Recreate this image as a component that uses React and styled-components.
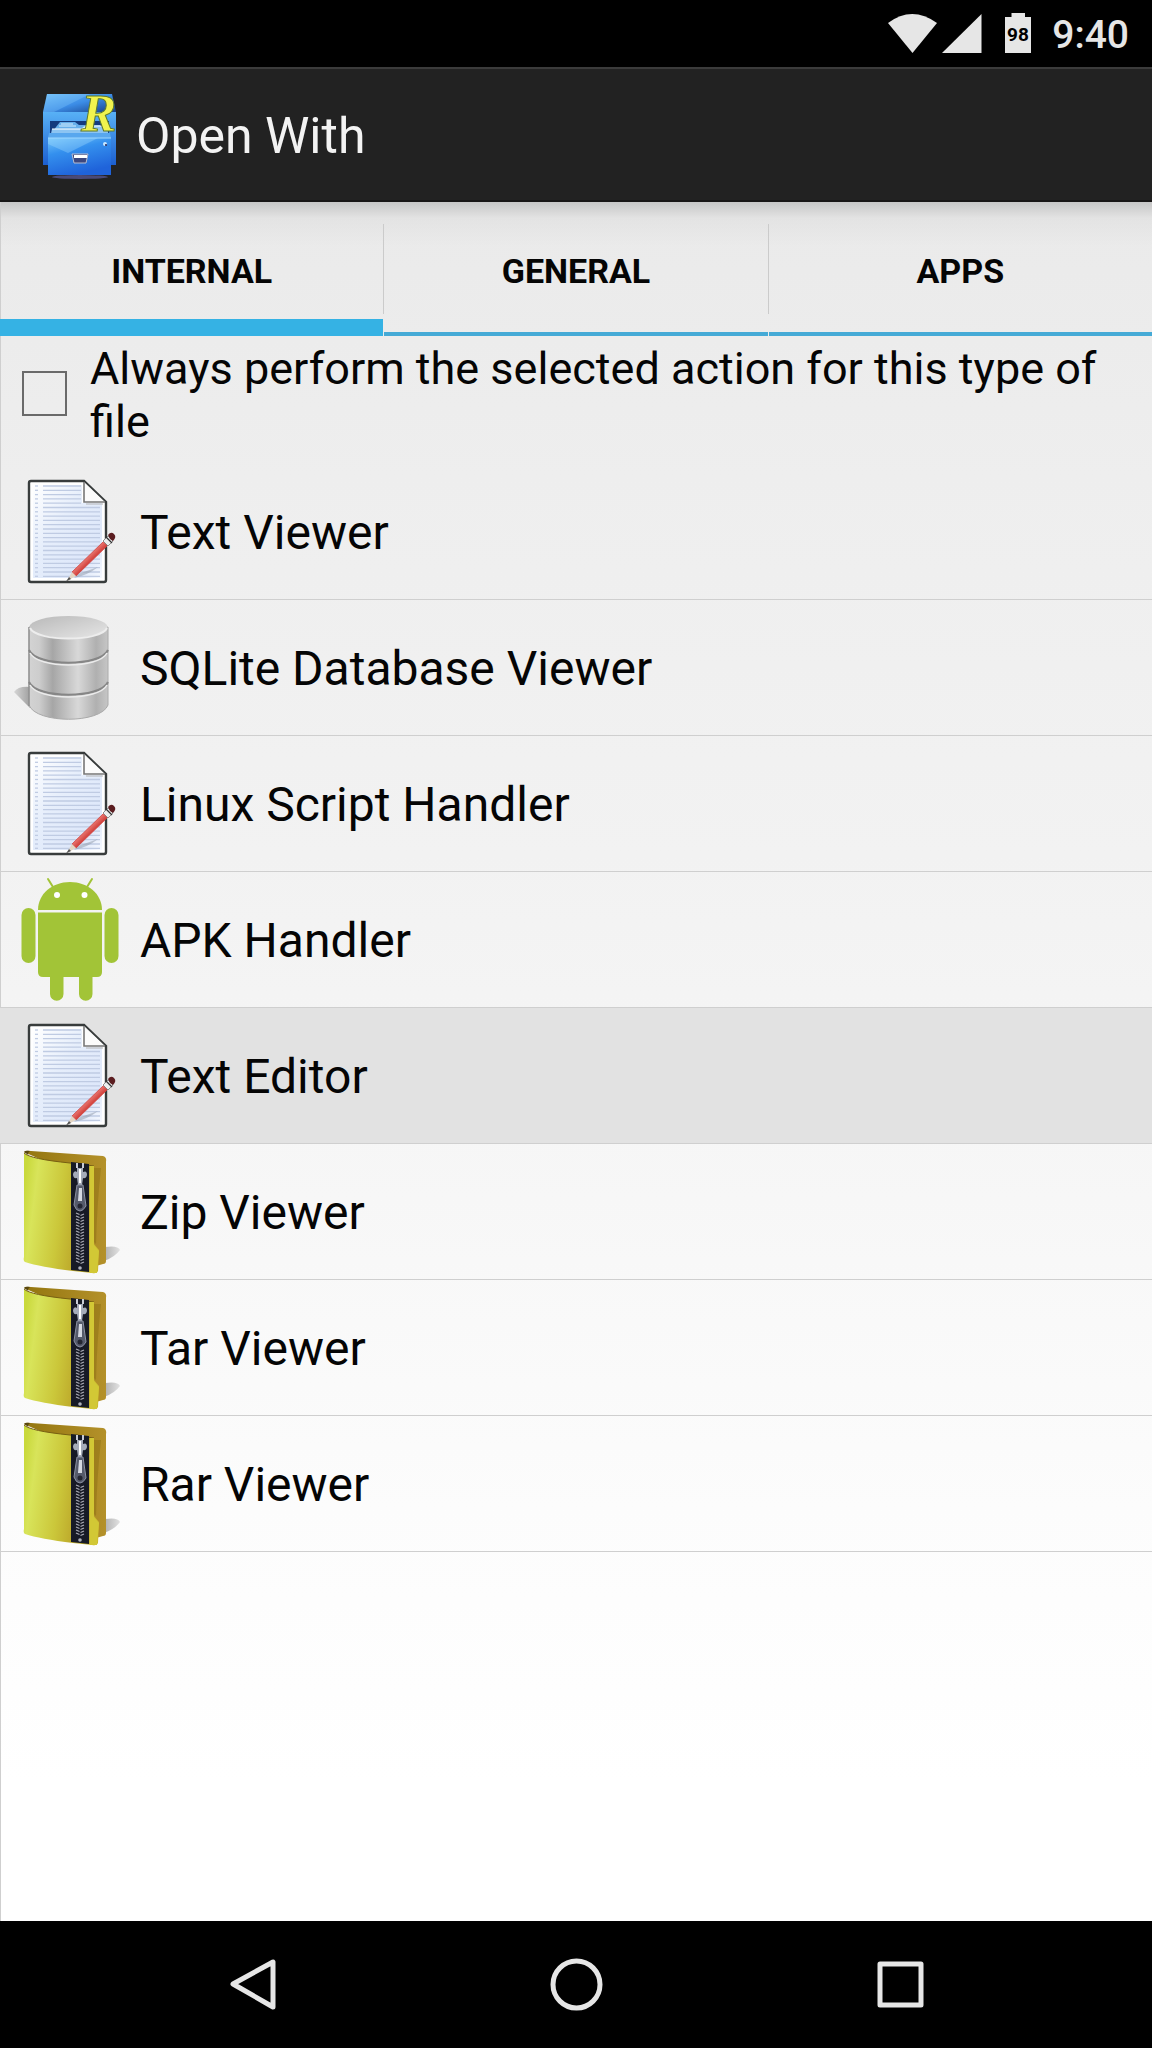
import React, { useState } from 'react'
import styled, { createGlobalStyle } from 'styled-components'

const GlobalStyle = createGlobalStyle`
* {
  box-sizing: border-box;
}
body {
  margin: 0;
  background: #000;
  font-family: Roboto, "Liberation Sans", sans-serif;
}
button {
  margin: 0;
  padding: 0;
  border: none;
  background: none;
  font: inherit;
  color: inherit;
  cursor: pointer;
}
svg {
  display: block;
  flex-shrink: 0;
}
`
const Container = styled.div`
min-height: 100vh;
display: flex;
flex-direction: column;
`
const StatusBar = styled.div`
height: 67px;
padding: 0 23px;
display: flex;
align-items: center;
justify-content: flex-end;
background: #000;
color: #e6e6e6;
`
const StatusIcons = styled.div`
display: flex;
margin-right: 19px;
`
const Clock = styled.time`
padding-top: 3px;
font-size: 39px;
line-height: 40px;
font-weight: 500;
`
const ActionBar = styled.header`
height: 135px;
padding-left: 30px;
display: flex;
align-items: center;
gap: 4px;
background: #222;
border-top: 2px solid #3b3b3b;
border-bottom: 2px solid #181616;
`
const Title = styled.h1`
margin: 0;
padding-top: 3px;
font-size: 50px;
line-height: 60px;
font-weight: 400;
color: #f3f3f3;
`
const Content = styled.main`
flex: 1;
box-shadow: inset 1px 0 #cfcfcf;
background:
  linear-gradient(#c6c6c6, rgba(220, 220, 220, 0.5) 16px, rgba(235, 235, 235, 0) 44px) no-repeat,
  linear-gradient(#eaeaea, #eeeeee 16%, #f2f2f2 38%, #f7f7f7 58%, #fcfcfc 76%, #fff 92%);
`
const Tabs = styled.div`
display: flex;
gap: 1px;
height: 134px;
`
const Divider = styled.div`
width: 1px;
height: 90px;
margin: 22px -1px 0 -1px;
background: #cbcbcb;
`
const Tab = styled.button`
flex: 1 1 0;
border-bottom: ${props => props.$active ? '17px solid #35b2e4' : '4px solid #45aad6'};
padding-top: ${props => props.$active ? '20px' : '7px'};
font-size: 34px;
line-height: 40px;
font-weight: 700;
text-transform: uppercase;
color: #050505;
`
const Always = styled.label`
min-height: 128px;
padding: 6px 16px 16px 22px;
display: flex;
align-items: center;
gap: 23px;
font-size: 45px;
line-height: 53px;
color: #050505;
`
const Checkbox = styled.input`
appearance: none;
flex-shrink: 0;
width: 45px;
height: 45px;
margin: 0 0 4px;
border: 2px solid #6a6a6a;
&:checked {
  background: #35b2e4;
}
`
const List = styled.ul`
margin: 0;
padding: 0;
list-style: none;
`
const Item = styled.li`
border-bottom: 1px solid #cfcfcf;
background: ${props => props.$pressed ? '#e2e2e2' : 'transparent'};
`
const Row = styled.button`
width: 100%;
height: 135px;
display: flex;
align-items: center;
gap: 16px;
text-align: left;
font-size: 48px;
line-height: 56px;
color: #050505;
`
const Name = styled.span`
padding-top: 3px;
`
const NavBar = styled.nav`
height: 127px;
padding: 0 90px;
display: flex;
background: #000;
`
const NavButton = styled.button`
flex: 1;
display: flex;
align-items: center;
justify-content: center;
`

const AppLogo = () => (
  <svg width="102" height="110" viewBox="0 0 102 110" aria-hidden="true">
    <defs>
      <linearGradient id="roof" x1="0" y1="0" x2="1" y2="1">
        <stop offset="0" stopColor="#6dbdf8" />
        <stop offset="0.5" stopColor="#3b8ce6" />
        <stop offset="1" stopColor="#173e86" />
      </linearGradient>
      <linearGradient id="cabinet" x1="0" y1="0" x2="0" y2="1">
        <stop offset="0" stopColor="#58b1f6" />
        <stop offset="1" stopColor="#1c5fd0" />
      </linearGradient>
      <linearGradient id="drawer" x1="0" y1="0" x2="0.4" y2="1">
        <stop offset="0" stopColor="#74c6fb" />
        <stop offset="0.4" stopColor="#3490ee" />
        <stop offset="1" stopColor="#1f63da" />
      </linearGradient>
    </defs>
    <ellipse cx="50" cy="97" rx="28" ry="2" fill="#4a4a78" />
    <path d="M17 14H82L86 32H13Z" fill="url(#roof)" />
    <path d="M17 14H60L24 32H13Z" fill="#8bd0ff" opacity="0.3" />
    <path d="M13 32H86V85H13Z" fill="url(#cabinet)" />
    <path d="M20 41H79V58H20Z" fill="#143a7e" />
    <path d="M26 47L30 42H45L49 45H70V50H24Z" fill="#66aeea" />
    <path d="M31 44H43M29 46H46" stroke="#d6efff" strokeWidth="1" />
    <path d="M22 49H50L54 46H77L79 58H20Z" fill="#8cc4f2" />
    <path d="M22 49H52L56 46H76" fill="none" stroke="#fff" strokeWidth="1" />
    <path d="M19 53H80L81 58H18Z" fill="#58a7ee" />
    <path d="M18 58H81V95H18Z" fill="url(#drawer)" />
    <path d="M18 58H68L38 73L18 64Z" fill="#a4dcff" opacity="0.35" />
    <path d="M18 58H81" stroke="#9ed7ff" strokeWidth="1" />
    <path d="M42 74H58L56 83H44Z" fill="#3c477e" stroke="#b7bdd0" strokeWidth="1" />
    <path d="M44 75H57V78H44Z" fill="#fff" />
    <circle cx="75" cy="64" r="2" fill="#c8e7ff" />
    <circle cx="76" cy="65" r="1" fill="#225" />
    <text
      x="51" y="51" fontFamily="Liberation Serif, serif" fontSize="53" fontWeight="700" fontStyle="italic"
      fill="#f0f34e" stroke="#5d792c" strokeWidth="1"
    >R</text>
  </svg>
)

const sheetLines = Array.from({ length: 22 }, (_, i) => 22 + i * 4.3)

const TextIcon = () => (
  <svg width="124" height="135" viewBox="0 0 124 135" aria-hidden="true">
    <defs>
      <linearGradient id="sheet" x1="0" y1="0" x2="1" y2="1">
        <stop offset="0" stopColor="#fff" />
        <stop offset="0.4" stopColor="#e6eefb" />
        <stop offset="0.8" stopColor="#dde7fa" />
        <stop offset="1" stopColor="#f6f9ff" />
      </linearGradient>
      <linearGradient id="pencil" x1="0" y1="0" x2="1" y2="1">
        <stop offset="0.4" stopColor="#f08a84" />
        <stop offset="0.55" stopColor="#d2413c" />
      </linearGradient>
    </defs>
    <path d="M31 17H84L106 38V116Q106 118 104 118H31Q29 118 29 116V19Q29 17 31 17Z" fill="#fff" stroke="#383c3c" strokeWidth="2.4" />
    <path d="M33 21H82V39H102V114H33Z" fill="url(#sheet)" />
    {sheetLines.map(y => (
      <g key={y} stroke="#bfcbe3" strokeWidth="1.3">
        <path d={`M35 ${y}h3`} />
        <path d={`M43 ${y}H${y < 41 ? 81 : 100}`} />
      </g>
    ))}
    <path d="M84 18V38H105Z" fill="#fbfbfb" />
    <path d="M84 18V38H105" fill="none" stroke="#777" strokeWidth="1.6" />
    <path d="M86 40H103" stroke="#b5b5b5" strokeWidth="1" />
    <path d="M74 114Q88 111 98 103L78 110Z" fill="#8f9aaa" opacity="0.5" />
    <path d="M104 77L108 81L76 112L72 108Z" fill="url(#pencil)" stroke="#d2413c" strokeWidth="0.8" />
    <path d="M72 108L76 112L67 117Z" fill="#e4d6c4" />
    <path d="M69 113L71 115L66 117.500Z" fill="#555" />
    <path d="M108 72L113 77L108 82L103 77Z" fill="#eceeee" stroke="#777" strokeWidth="0.8" />
    <path d="M108 71Q111 67 114 70Q117 73 113 77L110 75Z" fill="#5b1d20" />
    <path d="M106 73L112 79" stroke="#333" strokeWidth="1.2" />
  </svg>
)

const DatabaseIcon = () => (
  <svg width="124" height="135" viewBox="0 0 124 135" aria-hidden="true">
    <defs>
      <linearGradient id="steel" x1="0" x2="1">
        <stop offset="0" stopColor="#d3d3d3" />
        <stop offset="0.13" stopColor="#cdcdcd" />
        <stop offset="0.3" stopColor="#a6a6a6" />
        <stop offset="0.62" stopColor="#d8d8d8" />
        <stop offset="0.85" stopColor="#b0b0b0" />
        <stop offset="1" stopColor="#c6c6c6" />
      </linearGradient>
      <linearGradient id="lid" x1="0" y1="0" x2="1" y2="1">
        <stop offset="0" stopColor="#b9b9b9" />
        <stop offset="1" stopColor="#e6e6e6" />
      </linearGradient>
      <linearGradient id="dbShade" x1="0" x2="1">
        <stop offset="0" stopColor="#d6d6d6" />
        <stop offset="1" stopColor="#a0a0a0" />
      </linearGradient>
    </defs>
    <path d="M14 92Q18 86 30 87V108Q22 100 14 92Z" fill="url(#dbShade)" />
    <path d="M29 27V105C36 124 101 124 108 105V27Z" fill="url(#steel)" stroke="#aaa" strokeWidth="1" />
    <path d="M29 27V106" stroke="#898989" strokeWidth="1.2" />
    <ellipse cx="68.500" cy="27" rx="39" ry="11" fill="url(#lid)" />
    <path d="M30 28C36 42 101 42 107 28" fill="none" stroke="#ededed" strokeWidth="2" />
    <path d="M29 50C36 67 101 67 108 50M29 82C36 99 101 99 108 82" fill="none" stroke="#868686" strokeWidth="2" />
    <path d="M30 53C38 69 99 69 107 53M30 85C38 101 99 101 107 85" fill="none" stroke="#ebebeb" strokeWidth="1.5" />
  </svg>
)

const AndroidIcon = () => (
  <svg width="124" height="135" viewBox="0 0 124 135" fill="#a2c437" aria-hidden="true">
    <path d="M38 38C38 22 52 10 70 10S102 22 102 38Z" />
    <path d="M48 7L53 15M92 7L87 15" stroke="#a2c437" strokeWidth="2" strokeLinecap="round" />
    <circle cx="57" cy="23" r="3" fill="#fff" />
    <circle cx="84.500" cy="23" r="3" fill="#fff" />
    <path d="M38 40.500H102V100Q102 105 97 105H43Q38 105 38 100Z" />
    <rect x="21.500" y="36" width="14" height="55" rx="7" />
    <rect x="104.500" y="36" width="14" height="55" rx="7" />
    <path d="M50 100H63.500V122A6.750 6.750 0 0 1 50 122ZM79 100H92.500V122A6.750 6.750 0 0 1 79 122Z" />
  </svg>
)

const teeth = Array.from({ length: 17 }, (_, i) => 69 + i * 3)

const ArchiveIcon = () => (
  <svg width="124" height="135" viewBox="0 0 124 135" aria-hidden="true">
    <defs>
      <linearGradient id="cover" x1="0" x2="1" y1="0.3" y2="0.5">
        <stop offset="0" stopColor="#c9d93c" />
        <stop offset="0.15" stopColor="#d8e45a" />
        <stop offset="0.5" stopColor="#cbc73a" />
        <stop offset="0.75" stopColor="#bda92b" />
        <stop offset="1" stopColor="#c9b62e" />
      </linearGradient>
      <linearGradient id="back" x1="0" x2="1">
        <stop offset="0" stopColor="#93750f" />
        <stop offset="1" stopColor="#b4912a" />
      </linearGradient>
      <linearGradient id="folderShade" x1="0" x2="1">
        <stop offset="0" stopColor="#b0b0b0" />
        <stop offset="1" stopColor="#e2e2e2" />
      </linearGradient>
    </defs>
    <path d="M105 103Q118 101 120 106Q115 113 104 117Z" fill="url(#folderShade)" />
    <path d="M24 8Q26 6 31 7L103 12Q107 13 106 18V117Q106 120 103 120L96 122L60 24Z" fill="url(#back)" />
    <path d="M94 24H101Q97 60 96 100L94 98Z" fill="#84690e" opacity="0.4" />
    <path d="M24 9Q30 15 70 19L94 22V100L99 106L98 127Q97 130 92 129L73 127Q40 123 25 118Q23 117 24 113Z" fill="url(#cover)" />
    <path d="M24 9Q30 15 70 19L94 22" fill="none" stroke="#775f12" strokeWidth="1" />
    <path d="M24 8Q25 6 30 7Q26 10 30 12Z" fill="#59480f" />
    <path d="M90 22H94V101L99 107L97 129H90Z" fill="#d2c835" />
    <path d="M71 18L89 20V128L71 126Z" fill="#171a26" />
    <path d="M77 19V24M83 19V24" stroke="#c8cbd5" strokeWidth="2" />
    {teeth.map(y => (
      <path key={y} d={`M76 ${y}l3.500 1.500M84 ${y + 1}l-3.500 1.500`} stroke="#a9aab5" strokeWidth="1.300" />
    ))}
    <path d="M77 24H83V28Q87 26 87 31Q86 35 83 34L82 41H78L77 34Q73 35 73 30Q74 26 77 28Z" fill="#a5abb9" />
    <path d="M80 25V39" stroke="#fff" strokeWidth="2" />
    <path d="M77 41H83L86 62Q83 67 80 67Q76 67 74 61Z" fill="#555a6b" stroke="#8b90a2" strokeWidth="1" />
    <path d="M79 44H82V57H78Z" fill="#d6d9e2" />
    <circle cx="80" cy="62" r="2.500" fill="#242632" />
    <circle cx="80" cy="124" r="1.800" fill="#aeb1bc" />
  </svg>
)

const tabs = ['Internal', 'General', 'Apps']

const handlers = [
  { name: 'Text Viewer', icon: TextIcon },
  { name: 'SQLite Database Viewer', icon: DatabaseIcon },
  { name: 'Linux Script Handler', icon: TextIcon },
  { name: 'APK Handler', icon: AndroidIcon },
  { name: 'Text Editor', icon: TextIcon },
  { name: 'Zip Viewer', icon: ArchiveIcon },
  { name: 'Tar Viewer', icon: ArchiveIcon },
  { name: 'Rar Viewer', icon: ArchiveIcon },
]

const App = () => {
  const [tab, setTab] = useState('Internal')
  const [selected, setSelected] = useState('Text Editor')

  return (
    <Container>
      <GlobalStyle />
      <StatusBar>
        <StatusIcons>
          <svg width="146" height="42" viewBox="0 0 146 42" fill="#e6e6e6" aria-label="Wi-Fi, signal, battery 98">
            <path d="M1 10Q25 -8 50 10L25.500 40Z" />
            <path d="M55 40L94.500 1V40Z" />
            <path d="M118 4H124.500V0H138V4H144V40H118Z" />
            <text x="131" y="28" textAnchor="middle" fontFamily="Roboto, sans-serif" fontSize="19" fontWeight="700" fill="#000">98</text>
          </svg>
        </StatusIcons>
        <Clock>9:40</Clock>
      </StatusBar>
      <ActionBar>
        <AppLogo />
        <Title>Open With</Title>
      </ActionBar>
      <Content>
        <Tabs role="tablist">
          {tabs.map((name, i) => (
            <React.Fragment key={name}>
              {i > 0 && <Divider />}
              <Tab role="tab" aria-selected={tab === name} $active={tab === name} onClick={() => setTab(name)}>
                {name}
              </Tab>
            </React.Fragment>
          ))}
        </Tabs>
        <Always>
          <Checkbox type="checkbox" />
          <span>Always perform the selected action for this type of file</span>
        </Always>
        <List>
          {handlers.map(({ name, icon: Icon }) => (
            <Item key={name} $pressed={selected === name}>
              <Row onClick={() => setSelected(name)}>
                <Icon />
                <Name>{name}</Name>
              </Row>
            </Item>
          ))}
        </List>
      </Content>
      <NavBar>
        <NavButton aria-label="Back">
          <svg width="54" height="54" viewBox="0 0 54 54" fill="none" stroke="#e6e6e6" strokeWidth="5" strokeLinejoin="round">
            <path d="M48 4V49L8 26Z" />
          </svg>
        </NavButton>
        <NavButton aria-label="Home">
          <svg width="54" height="54" viewBox="0 0 54 54" fill="none" stroke="#e6e6e6" strokeWidth="5">
            <circle cx="27.500" cy="26.500" r="23.500" />
          </svg>
        </NavButton>
        <NavButton aria-label="Recent apps">
          <svg width="54" height="54" viewBox="0 0 54 54" fill="none" stroke="#e6e6e6" strokeWidth="5" strokeLinejoin="round">
            <rect x="7" y="6" width="41" height="41" />
          </svg>
        </NavButton>
      </NavBar>
    </Container>
  )
}

export default App
